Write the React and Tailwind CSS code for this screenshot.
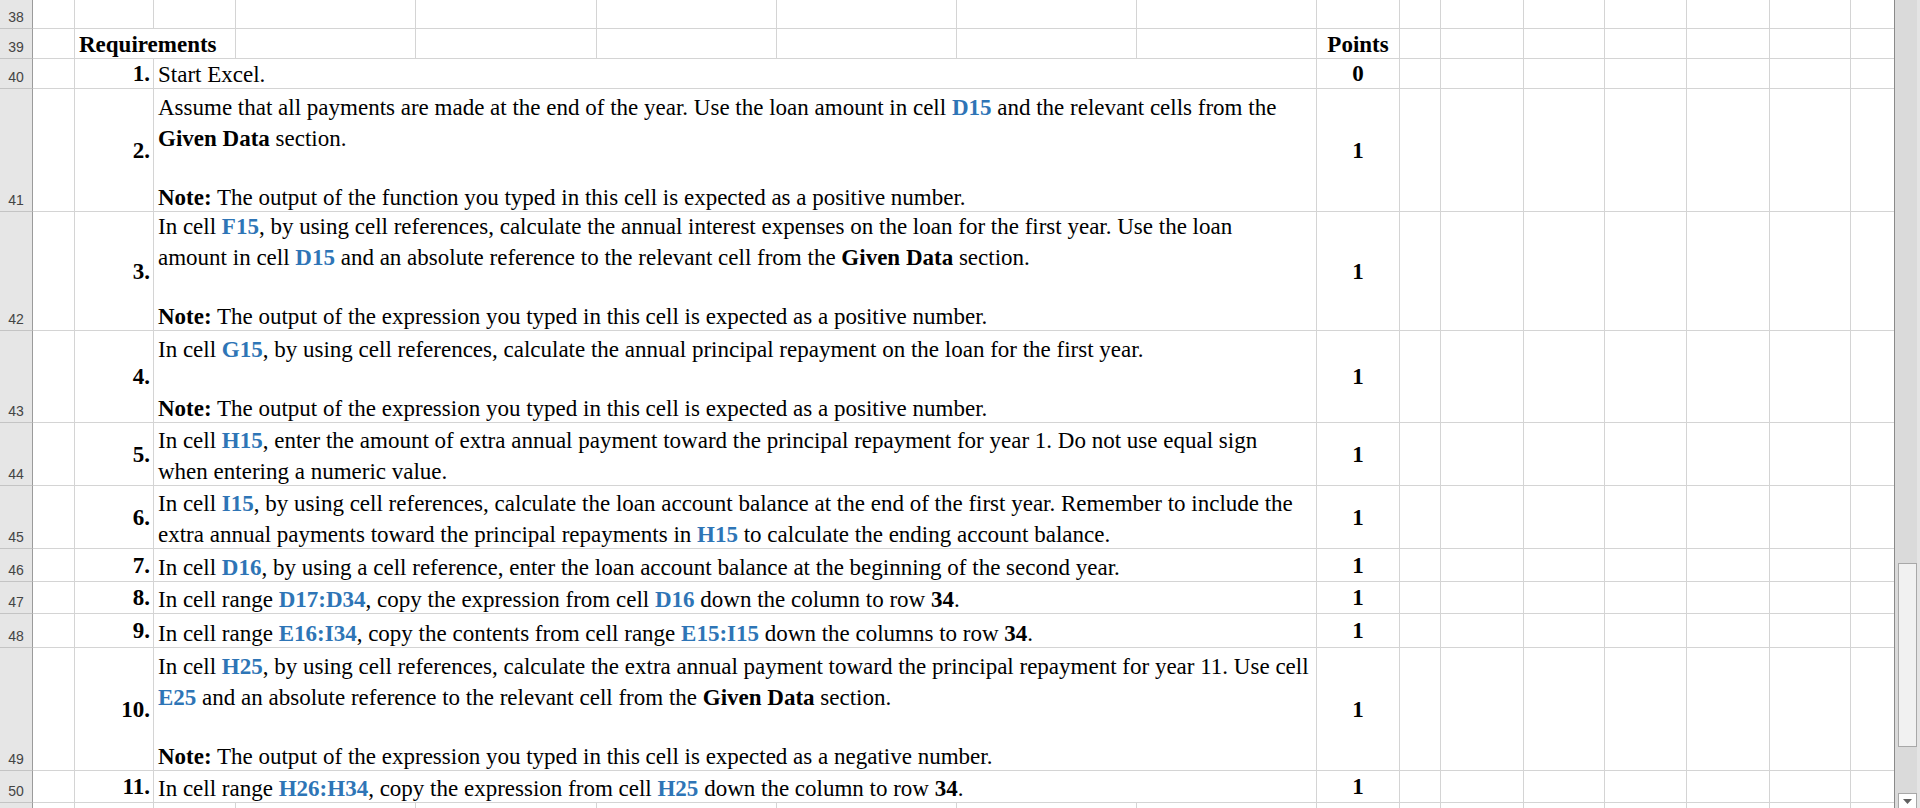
import React from "react";

// Excel-like sheet: rows 38-51, requirements list
const Ref = ({ children }) => <span className="font-bold text-[#2e75b6]">{children}</span>;
const B = ({ children }) => <span className="font-bold">{children}</span>;

const cellBase = "border-r border-b border-[#d4d4d4]";

const RowHead = ({ n }) => (
  <div className="bg-[#e6e6e6] border-r border-r-[#9b9b9b] border-b border-b-[#c4c4c4] flex items-end justify-center pb-[4px] font-['Liberation_Sans',Arial,sans-serif] text-[14px] leading-none text-[#444]">
    {n}
  </div>
);

const Empty = ({ last = false }) => (
  <div className={last ? "border-b border-[#d4d4d4]" : cellBase} />
);

// columns K..Q to the right of Points
const Tail = () => (
  <>
    {[0, 1, 2, 3, 4, 5].map((i) => (
      <Empty key={i} />
    ))}
    <Empty last />
  </>
);

const BlankRow = ({ n }) => (
  <>
    <RowHead n={n} />
    {Array.from({ length: 16 }).map((_, i) => (
      <Empty key={i} />
    ))}
    <Empty last />
  </>
);

// blank lines in the cells are a bit shorter than text lines
const Line = ({ children }) =>
  children === "" ? (
    <div className="shrink-0 h-[28px]" />
  ) : (
    <div className="shrink-0 h-[31px] leading-[35px] whitespace-nowrap">{children}</div>
  );

const ReqRow = ({ n, num, points, lines }) => (
  <>
    <RowHead n={n} />
    <div className={cellBase} />
    <div className={`${cellBase} flex items-center justify-end pr-[3px] font-bold`}>{num}</div>
    <div className={`${cellBase} col-span-7 flex flex-col justify-end overflow-hidden pl-[4px]`}>
      {lines.map((l, i) => (
        <Line key={i}>{l}</Line>
      ))}
    </div>
    <div className={`${cellBase} flex items-center justify-center font-bold`}>{points}</div>
    <Tail />
  </>
);

const rows = [
  {
    n: 40,
    num: "1.",
    points: "0",
    lines: ["Start Excel."],
  },
  {
    n: 41,
    num: "2.",
    points: "1",
    lines: [
      <>
        Assume that all payments are made at the end of the year. Use the loan amount in cell <Ref>D15</Ref> and the relevant cells from the
      </>,
      <>
        <B>Given Data</B> section.
      </>,
      "",
      <>
        <B>Note:</B> The output of the function you typed in this cell is expected as a positive number.
      </>,
    ],
  },
  {
    n: 42,
    num: "3.",
    points: "1",
    lines: [
      <>
        In cell <Ref>F15</Ref>, by using cell references, calculate the annual interest expenses on the loan for the first year. Use the loan
      </>,
      <>
        amount in cell <Ref>D15</Ref> and an absolute reference to the relevant cell from the <B>Given Data</B> section.
      </>,
      "",
      <>
        <B>Note:</B> The output of the expression you typed in this cell is expected as a positive number.
      </>,
    ],
  },
  {
    n: 43,
    num: "4.",
    points: "1",
    lines: [
      <>
        In cell <Ref>G15</Ref>, by using cell references, calculate the annual principal repayment on the loan for the first year.
      </>,
      "",
      <>
        <B>Note:</B> The output of the expression you typed in this cell is expected as a positive number.
      </>,
    ],
  },
  {
    n: 44,
    num: "5.",
    points: "1",
    lines: [
      <>
        In cell <Ref>H15</Ref>, enter the amount of extra annual payment toward the principal repayment for year 1. Do not use equal sign
      </>,
      "when entering a numeric value.",
    ],
  },
  {
    n: 45,
    num: "6.",
    points: "1",
    lines: [
      <>
        In cell <Ref>I15</Ref>, by using cell references, calculate the loan account balance at the end of the first year. Remember to include the
      </>,
      <>
        extra annual payments toward the principal repayments in <Ref>H15</Ref> to calculate the ending account balance.
      </>,
    ],
  },
  {
    n: 46,
    num: "7.",
    points: "1",
    lines: [
      <>
        In cell <Ref>D16</Ref>, by using a cell reference, enter the loan account balance at the beginning of the second year.
      </>,
    ],
  },
  {
    n: 47,
    num: "8.",
    points: "1",
    lines: [
      <>
        In cell range <Ref>D17:D34</Ref>, copy the expression from cell <Ref>D16</Ref> down the column to row <B>34</B>.
      </>,
    ],
  },
  {
    n: 48,
    num: "9.",
    points: "1",
    lines: [
      <>
        In cell range <Ref>E16:I34</Ref>, copy the contents from cell range <Ref>E15:I15</Ref> down the columns to row <B>34</B>.
      </>,
    ],
  },
  {
    n: 49,
    num: "10.",
    points: "1",
    lines: [
      <>
        In cell <Ref>H25</Ref>, by using cell references, calculate the extra annual payment toward the principal repayment for year 11. Use cell
      </>,
      <>
        <Ref>E25</Ref> and an absolute reference to the relevant cell from the <B>Given Data</B> section.
      </>,
      "",
      <>
        <B>Note:</B> The output of the expression you typed in this cell is expected as a negative number.
      </>,
    ],
  },
  {
    n: 50,
    num: "11.",
    points: "1",
    lines: [
      <>
        In cell range <Ref>H26:H34</Ref>, copy the expression from cell <Ref>H25</Ref> down the column to row <B>34</B>.
      </>,
    ],
  },
];

const Scrollbar = () => (
  <div className="relative w-[26px] h-[808px] shrink-0 bg-[#dadada] border-l border-[#8a8a8a]">
    <div className="absolute right-0 top-0 w-[3px] h-full bg-[#e4e4e4]" />
    <div className="absolute left-[3px] top-[563px] w-[19px] h-[184px] bg-[#f1f1f1] border border-[#a8a8a8]" />
    <div className="absolute left-[3px] top-[793px] w-[19px] h-[16px] bg-white border border-[#a8a8a8] flex items-center justify-center">
      <svg width="9" height="5" viewBox="0 0 9 5">
        <path d="M0 0 L9 0 L4.5 5 Z" fill="#606060" />
      </svg>
    </div>
  </div>
);

export default function App() {
  return (
    <div className="w-[1920px] h-[808px] overflow-hidden flex bg-white">
      <div className="grid flex-1 h-[808px] overflow-hidden grid-cols-[33px_42px_79px_82px_180px_181px_180px_180px_180px_180px_83px_41px_83px_81px_82px_83px_81px_43px] grid-rows-[29px_30px_30px_123px_119px_92px_63px_63px_33px_32px_34px_123px_32px_30px] font-['Liberation_Serif','Times_New_Roman',serif] text-[23px] leading-[31px] text-black">
        <BlankRow n={38} />

        {/* row 39: headings */}
        <RowHead n={39} />
        <div className={cellBase} />
        <div className="col-span-2 border-r border-b border-[#d4d4d4] flex items-end pl-[4px] font-bold whitespace-nowrap">
          <div className="h-[31px] leading-[35px]">Requirements</div>
        </div>
        {[0, 1, 2, 3, 4, 5].map((i) => (
          <Empty key={i} />
        ))}
        <div className={`${cellBase} flex items-end justify-center font-bold`}>
          <div className="h-[31px] leading-[35px]">Points</div>
        </div>
        <Tail />

        {rows.map((r) => (
          <ReqRow key={r.n} {...r} />
        ))}

        <BlankRow n="" />
      </div>
      <Scrollbar />
    </div>
  );
}
